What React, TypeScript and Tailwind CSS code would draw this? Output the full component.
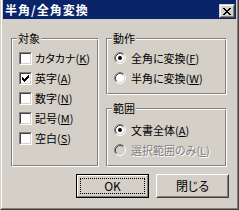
import type { ReactNode } from 'react'
import { clsx } from 'clsx'

const raisedOuter = 'border border-t-white border-l-white border-b-[#404040] border-r-[#404040]'

interface GroupBoxProps {
  title: string
  className?: string
  children: ReactNode
}

const GroupBox = ({ title, className, children }: GroupBoxProps) => (
  <div
    className={clsx(
      'relative border border-t-[#808080] border-l-[#808080] border-b-white border-r-white',
      className,
    )}
  >
    <div className="h-full border border-t-white border-l-white border-b-[#808080] border-r-[#808080]">
      {children}
    </div>
    <span className="absolute -top-[8px] left-[5px] bg-[#d4d0c8] px-px leading-[14px]">{title}</span>
  </div>
)

const Label = ({ text, hot, disabled }: { text: string; hot: string; disabled?: boolean }) => (
  <span
    className={clsx(
      'leading-[14px] whitespace-nowrap',
      disabled && 'text-[#808080] [text-shadow:1px_1px_0_#fff]',
    )}
  >
    {text}(<span className="underline underline-offset-1">{hot}</span>)
  </span>
)

// classic 7x7 tick, one 1x3 column per pixel column
const tickCols = [2, 3, 4, 3, 2, 1, 0]

const Checkbox = ({ checked }: { checked?: boolean }) => (
  <div className="h-[13px] w-[13px] shrink-0 border border-t-[#808080] border-l-[#808080] border-b-white border-r-white">
    <div className="flex h-full w-full items-center justify-center border border-t-[#404040] border-l-[#404040] border-b-[#d4d0c8] border-r-[#d4d0c8] bg-white">
      {checked && (
        <svg width="7" height="7" viewBox="0 0 7 7" shapeRendering="crispEdges">
          {tickCols.map((y, x) => (
            <rect key={x} x={x} y={y} width="1" height="3" fill="#000" />
          ))}
        </svg>
      )}
    </div>
  </div>
)

const Radio = ({ checked, disabled }: { checked?: boolean; disabled?: boolean }) => (
  <svg width="12" height="12" viewBox="0 0 12 12" className="shrink-0">
    <circle cx="6" cy="6" r="5" fill={disabled ? '#d4d0c8' : '#fff'} />
    <path d="M2.11 9.89A5.5 5.5 0 0 1 9.89 2.11" fill="none" stroke="#808080" />
    <path d="M9.89 2.11A5.5 5.5 0 0 1 2.11 9.89" fill="none" stroke="#fff" />
    <path d="M2.82 9.18A4.5 4.5 0 0 1 9.18 2.82" fill="none" stroke="#404040" />
    <path d="M9.18 2.82A4.5 4.5 0 0 1 2.82 9.18" fill="none" stroke="#d4d0c8" />
    {checked && <circle cx="6" cy="6" r="2" fill="#000" />}
  </svg>
)

const closeGlyph = [
  'XX....XX',
  '.XX..XX.',
  '..XXXX..',
  '...XX...',
  '..XXXX..',
  '.XX..XX.',
  'XX....XX',
]

const CloseButton = () => (
  <div className="mt-[4px] h-[14px] w-[16px] self-start border border-t-[#d4d0c8] border-l-[#d4d0c8] border-b-[#404040] border-r-[#404040] bg-[#d4d0c8]">
    <div className="flex h-full w-full items-center justify-center border border-t-white border-l-white border-b-[#808080] border-r-[#808080] pt-px">
      <svg width="8" height="7" viewBox="0 0 8 7" shapeRendering="crispEdges">
        {closeGlyph.flatMap((row, y) =>
          row.split('').map((c, x) => (c === 'X' ? <rect key={`${x}-${y}`} x={x} y={y} width="1" height="1" fill="#000" /> : null)),
        )}
      </svg>
    </div>
  </div>
)

const Row = ({ children }: { children: ReactNode }) => (
  <div className="flex h-[20px] items-center">{children}</div>
)

export default function App() {
  return (
    <div className="h-[210px] w-[239px] border-r border-b border-r-[#404040] border-b-[#404040] border-l border-l-[#d4d0c8] bg-[#d4d0c8] font-['Noto_Sans_CJK_JP',sans-serif] text-[11px] text-black [font-feature-settings:'palt']">
      <div className="flex h-full flex-col border-r border-b border-l border-r-[#808080] border-b-[#808080] border-l-white">
        <div className="flex h-full flex-col border-r border-b border-l border-[#d4d0c8]">
          {/* title bar */}
          <div className="flex h-[19px] shrink-0 items-center justify-between bg-[#0a246a] pr-[1px] pl-[2px]">
            <span className="text-[12px] font-bold leading-[14px] tracking-[1px] text-white">半角/全角変換</span>
            <CloseButton />
          </div>

          <div className="flex flex-1 flex-col pt-[19px] pr-[8px] pl-[8px]">
            <div className="flex h-[129px] gap-[7px]">
              <GroupBox title="対象" className="w-[88px]">
                <div className="flex flex-col pt-[8px] pl-[6px]">
                  {[
                    ['カタカナ', 'K', false],
                    ['英字', 'A', true],
                    ['数字', 'N', false],
                    ['記号', 'M', false],
                    ['空白', 'S', false],
                  ].map(([text, hot, checked]) => (
                    <Row key={hot as string}>
                      <Checkbox checked={checked as boolean} />
                      <span className="ml-[3px]">
                        <Label text={text as string} hot={hot as string} />
                      </span>
                    </Row>
                  ))}
                </div>
              </GroupBox>

              <div className="flex w-[121px] flex-col gap-[13px]">
                <GroupBox title="動作" className="h-[57px]">
                  <div className="flex flex-col pt-[8px] pl-[6px]">
                    <Row>
                      <Radio checked />
                      <span className="ml-[5px]">
                        <Label text="全角に変換" hot="F" />
                      </span>
                    </Row>
                    <Row>
                      <Radio />
                      <span className="ml-[5px]">
                        <Label text="半角に変換" hot="W" />
                      </span>
                    </Row>
                  </div>
                </GroupBox>

                <GroupBox title="範囲" className="h-[59px]">
                  <div className="flex flex-col pt-[10px] pl-[6px]">
                    <Row>
                      <Radio checked />
                      <span className="ml-[5px]">
                        <Label text="文書全体" hot="A" />
                      </span>
                    </Row>
                    <Row>
                      <Radio disabled />
                      <span className="ml-[5px]">
                        <Label text="選択範囲のみ" hot="L" disabled />
                      </span>
                    </Row>
                  </div>
                </GroupBox>
              </div>
            </div>

            <div className="mt-[7px] -mr-px flex justify-end gap-[7px]">
              <button className="h-[24px] w-[73px] border border-black bg-[#d4d0c8] p-0">
                <div className="h-full border border-t-white border-l-white border-b-[#808080] border-r-[#808080] p-[2px]">
                  <div className="flex h-full items-center justify-center border border-dotted border-black text-[12px] leading-[14px]">
                    OK
                  </div>
                </div>
              </button>
              <button className={clsx('h-[24px] w-[73px] bg-[#d4d0c8] p-0', raisedOuter)}>
                <div className="flex h-full items-center justify-center border border-t-[#d4d0c8] border-l-[#d4d0c8] border-b-[#808080] border-r-[#808080] text-[12px] leading-[14px]">
                  閉じる
                </div>
              </button>
            </div>
          </div>
        </div>
      </div>
    </div>
  )
}
